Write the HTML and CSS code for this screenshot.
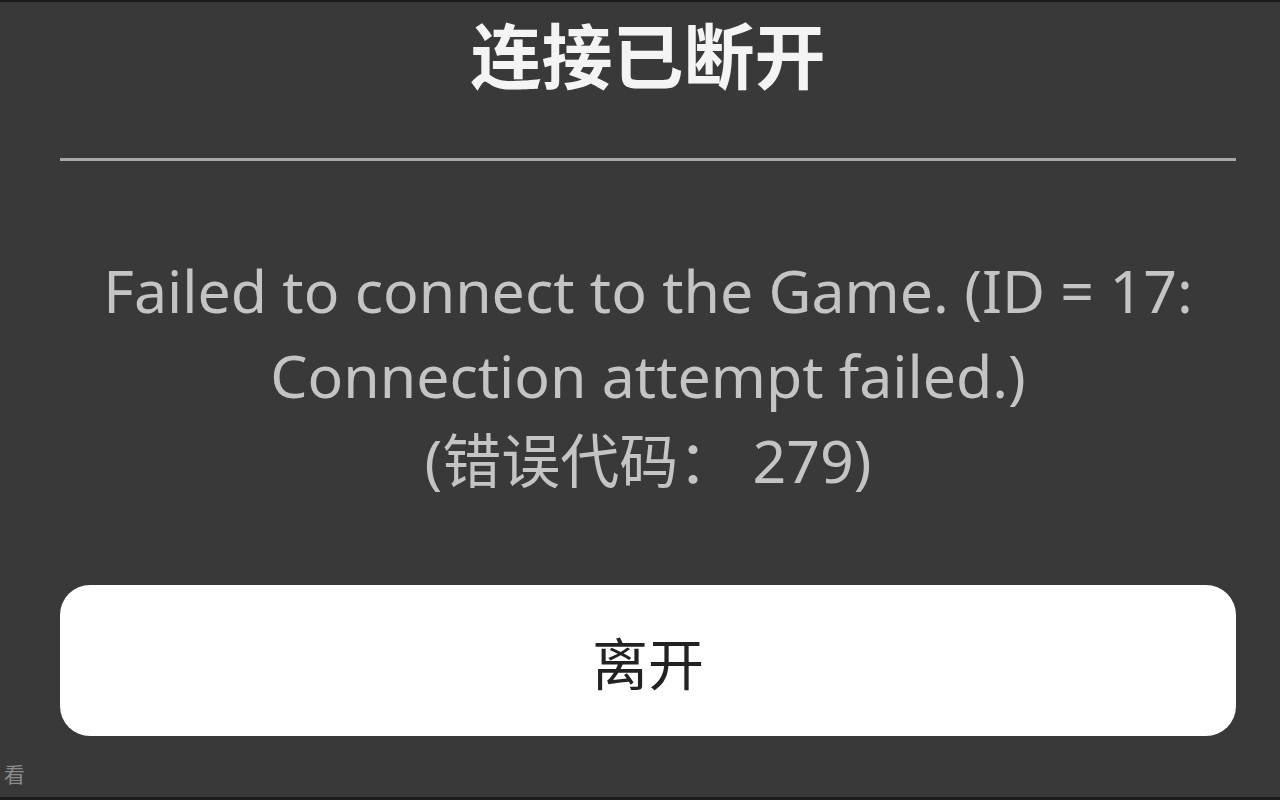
FILE: index.html
```html
<!DOCTYPE html>
<html lang="zh-CN">
<head>
  <meta charset="UTF-8" />
  <meta name="viewport" content="width=device-width, initial-scale=1.0" />
  <title>连接已断开</title>
  <link rel="stylesheet" href="styles.css">
</head>
<body>

  <div class="dialog">
    <h1 class="dialog-title">连接已断开</h1>
    <div class="divider"></div>

    <p class="message">
      Failed to connect to the Game. (ID = 17:<br>
      Connection attempt failed.)<br>
      (错误代码： 279)
    </p>

    <button class="leave-btn">离开</button>
  </div>

  <div class="corner-hint">看</div>

</body>
</html>
```

FILE: styles.css
```css
html, body {
  height: 100%;
}

body {
  margin: 0;
  background-color: #393939;
  font-family: "Noto Sans", "Noto Sans CJK SC", sans-serif;
  border-top: 2px solid #1c1c1c;
  border-bottom: 3px solid #1c1c1c;
  box-sizing: border-box;
  overflow: hidden;
  position: relative;
}

.dialog {
  width: 1176px;
  margin-left: 60px;
  display: flex;
  flex-direction: column;
  align-items: stretch;
}

.dialog-title {
  margin: 0;
  font-family: "Noto Sans CJK SC", sans-serif;
  font-size: 71px;
  font-weight: bold;
  line-height: 100px;
  color: #f4f4f4;
  text-align: center;
}

.divider {
  height: 3px;
  margin-top: 56px;
  background-color: #a8a8a8;
}

.message {
  margin: 87px 0 0;
  font-size: 59px;
  line-height: 85px;
  color: #c4c4c4;
  text-align: center;
}

.leave-btn {
  margin-top: 82px;
  height: 151px;
  border: none;
  border-radius: 30px;
  background-color: #ffffff;
  color: #222222;
  font-family: "Noto Sans CJK SC", sans-serif;
  font-size: 56px;
  cursor: pointer;
}

.corner-hint {
  position: absolute;
  left: 4px;
  bottom: 9px;
  font-family: "Noto Sans CJK SC", sans-serif;
  font-size: 21px;
  color: #8a8a8a;
}
```
